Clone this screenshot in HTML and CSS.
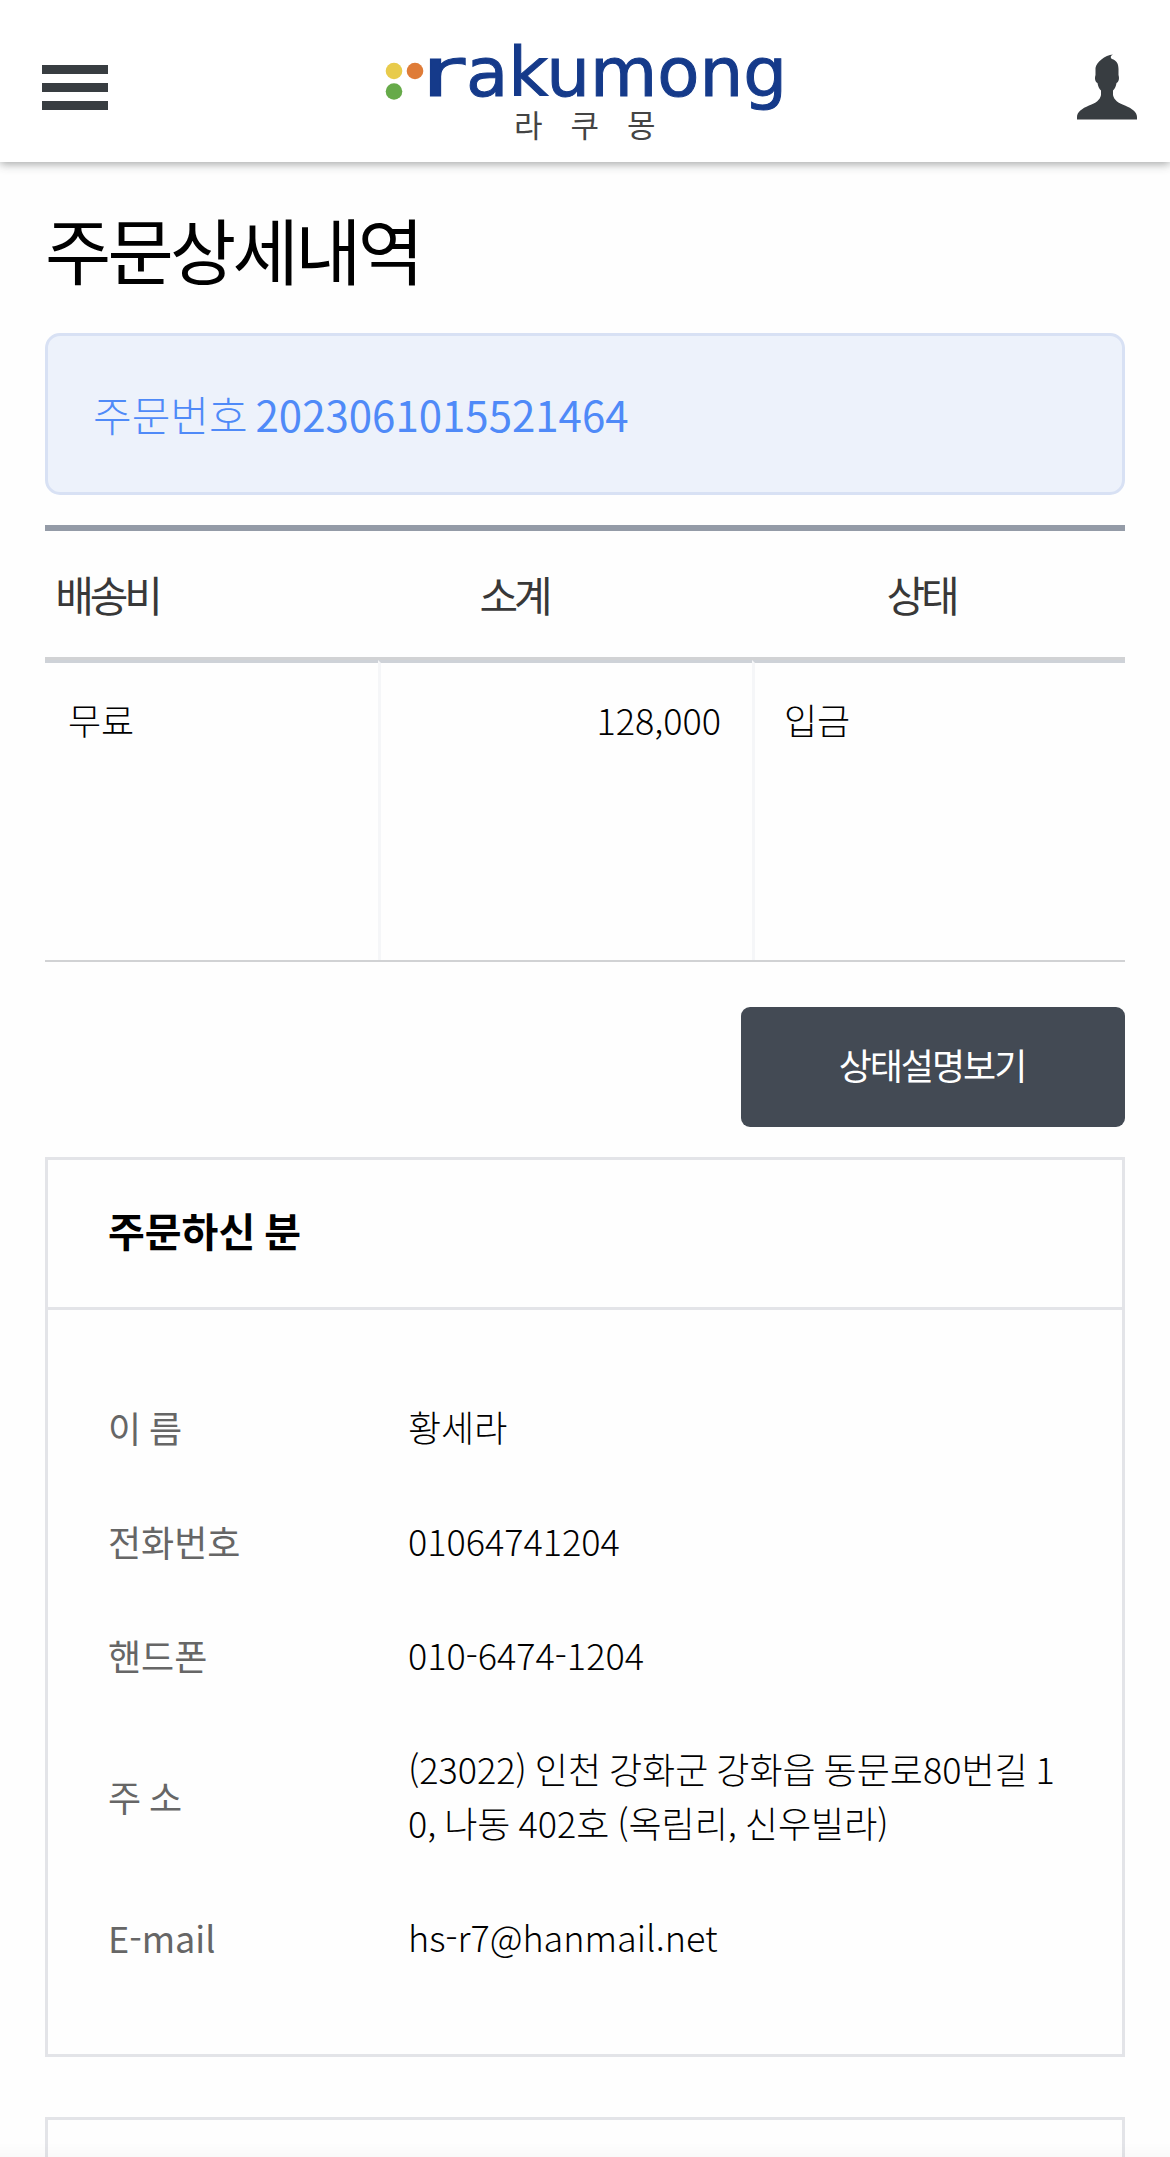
FILE: index.html
```html
<!DOCTYPE html>
<html lang="ko">
<head>
	<meta charset="utf-8">
	<title>주문상세내역</title>
	<link rel="stylesheet" href="styles.css">
</head>
<body>
	<header class="header">
		<button class="menu-btn" type="button" aria-label="menu">
			<span></span>
			<span></span>
			<span></span>
		</button>
		<svg class="logo" width="410" height="110" viewBox="0 0 410 110">
			<circle cx="14" cy="31" r="8.3" fill="#e8cb4b"/>
			<circle cx="35" cy="31" r="8.3" fill="#df7c38"/>
			<circle cx="14" cy="51.500" r="8.3" fill="#66aa49"/>
			<text class="logo-name" y="56"><tspan x="41" textLength="44" lengthAdjust="spacingAndGlyphs">r</tspan><tspan x="86" textLength="321" lengthAdjust="spacingAndGlyphs">akumong</tspan></text>
			<text class="logo-sub" x="134 190.500 247" y="97">라쿠몽</text>
		</svg>
		<svg class="user" width="60" height="66" viewBox="0 0 60 66">
			<path d="M36 .5C28 .5 19 9 18.500 14L18.500 21C17.500 24 18 28 20.500 29C21 32 22 35 24 36.500V41C23 46 19 49 12 51.500C5 54.500 0 58 0 63V65.500H60V63C60 58 55 54.500 48 51.500C41 49 37 46 36 41V36.500C38 35 39 32 39.500 29C42 28 42.500 24 41.500 21V15C41.500 9 39 6.500 35 5C33 3.500 33.500 1.500 36 .5Z"/>
		</svg>
	</header>

	<main class="content">
		<h1>주문상세내역</h1>
		<div class="order-no">주문번호 <strong>2023061015521464</strong></div>

		<div class="list">
			<div class="list-head">
				<span>배송비</span>
				<span>소계</span>
				<span>상태</span>
			</div>
			<div class="list-row">
				<div class="fee">무료</div>
				<div class="total">128,000</div>
				<div class="state">입금</div>
			</div>
		</div>

		<button class="state-btn" type="button">상태설명보기</button>

		<section class="card">
			<h2>주문하신 분</h2>
			<dl>
				<dt>이 름</dt>
				<dd>황세라</dd>
				<dt>전화번호</dt>
				<dd>01064741204</dd>
				<dt>핸드폰</dt>
				<dd>010-6474-1204</dd>
				<dt>주 소</dt>
				<dd>(23022) 인천 강화군 강화읍 동문로80번길 10, 나동 402호 (옥림리, 신우빌라)</dd>
				<dt>E-mail</dt>
				<dd>hs-r7@hanmail.net</dd>
			</dl>
		</section>

		<section class="card next"></section>
	</main>
</body>
</html>
```

FILE: styles.css
```css
* {
	box-sizing: border-box;
}
body {
	margin: 0;
	background: #fefefe;
	color: #000;
	font-family: "Noto Sans CJK KR", sans-serif;
	font-size: 36px;
	font-weight: 300;
	line-height: 54px;
	word-spacing: -0.06em;
}
button {
	border: 0;
	padding: 0;
	font-family: inherit;
}
.header {
	display: flex;
	justify-content: space-between;
	height: 162px;
	padding: 0 33px 0 42px;
	background: #fff;
	box-shadow: 0 2px 9px rgba(50, 55, 55, 0.45);
}
.menu-btn {
	display: flex;
	flex-direction: column;
	gap: 9px;
	width: 66px;
	margin-top: 65px;
	background: none;
}
.menu-btn span {
	width: 66px;
	height: 9px;
	background: #383d41;
}
.logo {
	margin-top: 40px;
	margin-right: 16px;
	overflow: visible;
}
.logo-name {
	font-family: "DejaVu Sans", sans-serif;
	font-size: 68px;
	font-weight: 400;
	fill: #153a8a;
	stroke: #153a8a;
	stroke-width: 1px;
}
.logo-sub {
	font-size: 31px;
	font-weight: 400;
	fill: #444;
}
.user {
	margin-top: 54px;
	fill: #383d41;
}
.content {
	padding: 0 45px;
}
h1 {
	margin: 0;
	padding-top: 32px;
	height: 171px;
	font-size: 72px;
	font-weight: 400;
	line-height: 108px;
	letter-spacing: -3.7px;
}
.order-no {
	height: 162px;
	padding: 0 45px;
	border: 3px solid #d8e1f4;
	border-radius: 15px;
	background: #edf2fb;
	color: #4f8af8;
	font-size: 42px;
	line-height: 156px;
	word-spacing: -0.09em;
}
.order-no strong {
	font-weight: 400;
}
.list {
	margin-top: 30px;
	border-top: 6px solid #949ba7;
	border-bottom: 2px solid #d1d2d4;
}
.list-head {
	display: grid;
	grid-template-columns: 124px 690px 124px;
	height: 129px;
	border-bottom: 3px solid #d1d2d4;
	color: #383838;
	font-size: 42px;
	font-weight: 400;
	line-height: 126px;
	letter-spacing: -4.2px;
	text-align: center;
}
.list-row {
	display: grid;
	grid-template-columns: 333px 374px 373px;
	height: 300px;
}
.list-row div {
	padding: 29px 31px 0 29px;
	border-top: 3px solid #ced2d8;
	border-left: 3px solid #f5f6f8;
}
.list-row .fee {
	padding-left: 23px;
	border-left: 0;
}
.list-row .total {
	text-align: right;
}
.state-btn {
	display: block;
	width: 384px;
	height: 120px;
	margin: 45px 0 30px auto;
	padding: 0 2px 7px 0;
	border-radius: 9px;
	background: #434a54;
	color: #fff;
	font-size: 36px;
	font-weight: 400;
	letter-spacing: -2px;
}
.card {
	border: 3px solid #e3e4e8;
}
.card h2 {
	height: 150px;
	margin: 0;
	padding: 0 60px;
	border-bottom: 3px solid #e3e4e8;
	font-size: 40px;
	font-weight: 700;
	line-height: 140px;
}
.card dl {
	display: grid;
	grid-template-columns: 300px 1fr;
	align-items: center;
	margin: 0;
	padding: 60px;
}
.card dt {
	color: #666;
	font-weight: 400;
}
.card dd {
	margin: 0;
	padding: 29px 0 31px;
	word-break: break-all;
}
.card.next {
	height: 40px;
	margin-top: 60px;
	border-bottom: 0;
}
/* soft fade along the bottom edge */
body::after {
	content: "";
	position: fixed;
	right: 0;
	bottom: 0;
	left: 0;
	height: 14px;
	background: linear-gradient(transparent, rgba(0, 0, 0, 0.02));
}
```
